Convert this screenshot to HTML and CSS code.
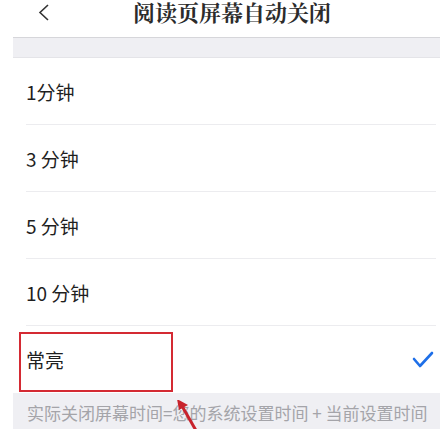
FILE: index.html
```html
<!DOCTYPE html>
<html lang="zh">
<head>
    <meta charset="UTF-8">
    <title>阅读页屏幕自动关闭</title>
    <link rel="stylesheet" href="styles.css">
</head>
<body>

<div class="screen">
    <div class="nav-bar">
        <svg class="back-icon" width="12" height="18" viewBox="0 0 12 18">
            <polyline points="10,1 2,8.5 10,16" fill="none" stroke="#333" stroke-width="1.6"/>
        </svg>
        <h1 class="nav-title">阅读页屏幕自动关闭</h1>
    </div>

    <div class="section-gap"></div>

    <div class="option-list">
        <div class="option-item"><span>1分钟</span></div>
        <div class="option-item"><span>3 分钟</span></div>
        <div class="option-item"><span>5 分钟</span></div>
        <div class="option-item"><span>10 分钟</span></div>
        <div class="option-item last">
            <span>常亮</span>
            <svg class="check-icon" width="22" height="18" viewBox="0 0 22 18">
                <polyline points="2,8 8,15 20,2" fill="none" stroke="#1e6fe8" stroke-width="2.6" stroke-linecap="round" stroke-linejoin="round"/>
            </svg>
        </div>
    </div>

    <div class="footer-note">实际关闭屏幕时间=您的系统设置时间 + 当前设置时间</div>
</div>

<!-- annotation marks over the screenshot -->
<div class="mark-box"></div>
<svg class="mark-arrow" width="40" height="40" viewBox="0 0 40 40">
    <line x1="8" y1="6" x2="24" y2="34" stroke="#c8232c" stroke-width="3"/>
    <polygon points="3,-1 14,5 5,10" fill="#c8232c"/>
</svg>

</body>
</html>
```

FILE: styles.css
```css
body {
    margin: 0;
    padding: 0;
    background: #ffffff;
    font-family: "Noto Sans CJK SC", "Noto Sans", sans-serif;
    color: #222;
    width: 440px;
    height: 429px;
    overflow: hidden;
    position: relative;
}

.screen {
    margin-left: 13px;
}

.nav-bar {
    display: flex;
    align-items: flex-start;
    height: 37px;
    border-bottom: 1px solid #d6d6da;
    background: #ffffff;
}

.back-icon {
    margin-left: 25px;
    margin-top: 4px;
}

.nav-title {
    margin: 0 0 0 83px;
    font-family: "Noto Serif CJK SC", "Noto Sans CJK SC", serif;
    font-size: 22px;
    line-height: 23px;
    font-weight: bold;
    color: #2b2b2b;
}

.section-gap {
    height: 19px;
    background: #efeff3;
    border-bottom: 1px solid #e4e4e8;
}

.option-list {
    background: #ffffff;
}

.option-item {
    display: flex;
    align-items: center;
    justify-content: space-between;
    height: 66px;
    margin-left: 13px;
    margin-right: 4px;
    border-bottom: 1px solid #ececef;
    font-size: 19px;
    color: #1f1f1f;
}

.option-item.last {
    border-bottom: none;
    margin-right: 0;
    height: 67px;
}

.check-icon {
    margin-right: 6px;
}

.footer-note {
    background: #efeff3;
    height: 38px;
    padding-left: 14px;
    padding-top: 5px;
    font-size: 17px;
    line-height: 30px;
    color: #a4a4a9;
    white-space: nowrap;
}

.mark-box {
    position: absolute;
    left: 19px;
    top: 332px;
    width: 150px;
    height: 56px;
    border: 2px solid #d42a33;
}

.mark-arrow {
    position: absolute;
    left: 174px;
    top: 400px;
}
```
